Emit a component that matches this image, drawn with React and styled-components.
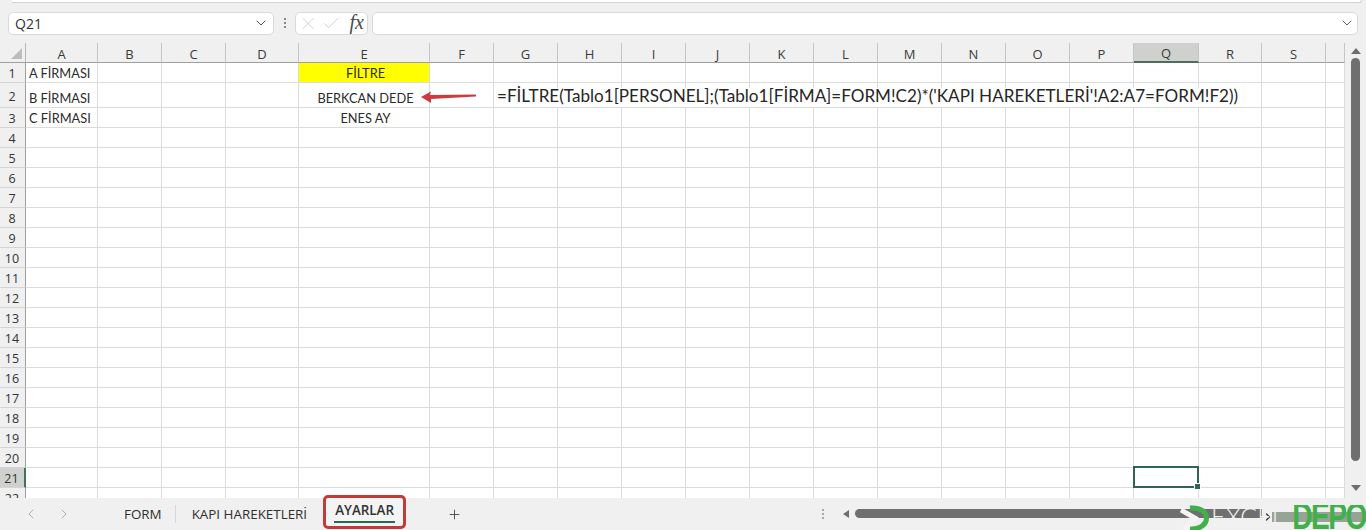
import React from 'react'
import styled, { createGlobalStyle } from 'styled-components'
import { ChevronDown, ChevronLeft, ChevronRight, Plus, X, Check } from 'lucide-react'

const columns = [
  ['A', 72], ['B', 64], ['C', 64], ['D', 73], ['E', 131], ['F', 64], ['G', 64], ['H', 64], ['I', 64], ['J', 64],
  ['K', 64], ['L', 64], ['M', 64], ['N', 64], ['O', 64], ['P', 64], ['Q', 65], ['R', 63], ['S', 64], ['T', 19]
]

const content = {
  A1: 'A FİRMASI',
  A2: 'B FİRMASI',
  A3: 'C FİRMASI',
  E1: 'FİLTRE',
  E2: 'BERKCAN DEDE',
  E3: 'ENES AY'
}

const GlobalStyle = createGlobalStyle`
  html, body {
    margin: 0;
    height: 100%;
    overflow: hidden;
    background: #f0f0f0;
  }
  body {
    font-family: "Open Sans", "Noto Sans", sans-serif;
    color: #262626;
  }
`

const Page = styled.div`
  width: 1366px;
  height: 530px;
  display: flex;
  flex-direction: column;
  background: #f0f0f0;
  overflow: hidden;
`

const RibbonEdge = styled.div`
  height: 2px;
  margin: 0 4px 0 12px;
  background: #fff;
  border-bottom: 1px solid #d2d2d2;
  border-right: 1px solid #d2d2d2;
  border-bottom-right-radius: 5px;
`

const FormulaRow = styled.div`
  display: flex;
  align-items: center;
  height: 24px;
  margin: 9px 8px 0;
`

const Field = styled.div`
  height: 100%;
  box-sizing: border-box;
  display: flex;
  align-items: center;
  background: #fff;
  border: 1px solid #d9d9d9;
  border-radius: 5px;
`

const NameBox = styled(Field)`
  width: 266px;
  padding: 0 4px 0 6px;
  justify-content: space-between;
  font-size: 14px;
  color: #333;
`

const Grip = styled.div`
  width: 21px;
  flex: none;
  display: flex;
  flex-direction: column;
  align-items: center;
  gap: 2px;
  & > i {
    width: 2px;
    height: 2px;
    background: ${({ $light }) => ($light ? '#a8a8a8' : '#8a8a8a')};
  }
`

const FxBox = styled(Field)`
  width: 73px;
  padding: 0 3px 0 2px;
  gap: 3px;
  color: #c8c8c8;
`

const FxLabel = styled.span`
  font-family: "Liberation Serif", serif;
  font-style: italic;
  font-size: 20px;
  line-height: 20px;
  color: #4a4a4a;
  margin: -3px 0 0 5px;
`

const FormulaInput = styled(Field)`
  flex: 1;
  margin-left: 4px;
  justify-content: flex-end;
  padding-right: 2px;
  color: #555;
`

const SheetArea = styled.div`
  display: flex;
  height: 455px;
  margin-top: 8px;
`

const Grid = styled.div`
  width: 1345px;
  height: 455px;
  overflow: hidden;
  display: grid;
  grid-template-columns: 26px ${columns.map(([, w]) => `${w}px`).join(' ')};
  grid-auto-rows: 20px;
  grid-template-rows: 20px 20px 25px;
  background: #fff;
`

const Corner = styled.div`
  position: relative;
  background: #f0f0f0;
  border-right: 1px solid #b5b5b5;
  border-bottom: 1px solid #9f9f9f;
  &::after {
    content: '';
    position: absolute;
    right: 3px;
    bottom: 3px;
    border-style: solid;
    border-width: 0 0 11px 11px;
    border-color: transparent transparent #bdbdbd transparent;
  }
`

const ColumnHead = styled.div`
  box-sizing: border-box;
  display: flex;
  align-items: center;
  justify-content: center;
  font-size: 13px;
  padding-top: 2px;
  color: #3a3a3a;
  background: ${({ $active }) => ($active ? '#cfd1cf' : '#f0f0f0')};
  border-right: 1px solid #c6c6c6;
  border-bottom: ${({ $active }) => ($active ? '2px solid #4d6e5e' : '1px solid #9f9f9f')};
`

const RowHead = styled.div`
  box-sizing: border-box;
  display: flex;
  align-items: center;
  justify-content: center;
  font-size: 12.5px;
  padding: 2px 1px 0 0;
  color: #333;
  background: ${({ $active }) => ($active ? '#cfd1cf' : '#f0f0f0')};
  border-right: ${({ $active }) => ($active ? '2px solid #44705c' : '1px solid #9f9f9f')};
  border-bottom: 1px solid #d4d4d4;
`

const Cell = styled.div`
  box-sizing: border-box;
  position: relative;
  display: flex;
  align-items: flex-end;
  justify-content: ${({ $center }) => ($center ? 'center' : 'flex-start')};
  padding: 0 0 0 3px;
  font-family: Lato, "Open Sans", sans-serif;
  font-size: 12.8px;
  line-height: 18px;
  white-space: nowrap;
  color: #2b2b2b;
  background: ${({ $fill }) => $fill || 'transparent'};
  border-right: 1px solid #dcdcdc;
  border-bottom: 1px solid #dcdcdc;
`

const Selection = styled.div`
  position: absolute;
  inset: -2px -1px -1px -1px;
  border: 2px solid #2f6650;
  z-index: 2;
  &::after {
    content: '';
    position: absolute;
    right: -4px;
    bottom: -4px;
    width: 5px;
    height: 5px;
    background: #2f6650;
    border: 1px solid #fff;
  }
`

const FormulaText = styled.span`
  position: relative;
  z-index: 1;
  height: 19px;
  line-height: 16px;
  padding-right: 2px;
  font-size: 17.1px;
  color: #262626;
  background: #fff;
`

const Arrow = styled.svg`
  position: absolute;
  left: -10px;
  top: 7px;
  z-index: 2;
`

const VerticalBar = styled.div`
  width: 21px;
  display: flex;
  flex-direction: column;
  align-items: center;
  padding: 5px 0 0 0;
  box-sizing: border-box;
  background: #f0f0f0;
`

const ArrowUp = styled.div`
  border-style: solid;
  border-width: 0 5px 6px;
  border-color: transparent transparent #6e6e6e;
`

const ArrowDown = styled(ArrowUp)`
  border-width: 6px 5px 0;
  border-color: #6e6e6e transparent transparent;
  margin-top: 24px;
`

const VerticalThumb = styled.div`
  width: 9px;
  height: 403px;
  margin-top: 4px;
  border-radius: 5px;
  background: #6f6f6f;
`

const TabBar = styled.div`
  position: relative;
  flex: 1;
  display: flex;
  align-items: center;
  background: #f0f0f0;
`

const NavButtons = styled.div`
  width: 114px;
  padding-left: 23px;
  box-sizing: border-box;
  display: flex;
  gap: 17px;
  color: #a9a9a9;
`

const Tabs = styled.div`
  display: flex;
  align-items: center;
  height: 32px;
`

const Tab = styled.div`
  position: relative;
  font-size: 13.4px;
  line-height: 18px;
  padding: ${({ $divider }) => ($divider ? '0 13px 0 10px' : '0 10px 0 16px')};
  color: #2f2f2f;
  border-right: ${({ $divider }) => ($divider ? '1px solid #d6d6d6' : 'none')};
`

const ActiveTab = styled.div`
  box-sizing: border-box;
  align-self: flex-start;
  width: 83px;
  height: 34px;
  margin: -3px 0 0 6px;
  padding-top: 3px;
  display: flex;
  flex-direction: column;
  align-items: center;
  font-size: 13.4px;
  line-height: 19px;
  font-weight: 600;
  color: #333;
  background: #f4f4f4;
  border: 3px solid #c23b3b;
  border-radius: 5px;
`

const TabUnderline = styled.div`
  width: 61px;
  height: 2px;
  margin-top: 1px;
  background: #2f6650;
`

const AddSheet = styled.div`
  margin-left: 41px;
  display: flex;
  color: #444;
`

const Scroller = styled.div`
  position: absolute;
  left: 812px;
  right: 0;
  top: 11px;
  height: 9px;
  display: flex;
  align-items: center;
`

const ScrollArrow = styled.div`
  margin-left: 10px;
  border-style: solid;
  border-width: 4px 6px 4px 0;
  border-color: transparent #6e6e6e transparent transparent;
`

const HorizontalThumb = styled.div`
  flex: none;
  width: 407px;
  height: 9px;
  margin-left: 6px;
  border-radius: 5px 0 0 5px;
  background: #6f6f6f;
`

const ScrollEnd = styled.div`
  flex: none;
  color: #333;
  display: flex;
  margin-top: 6px;
`

const ScrollSmudge = styled.div`
  flex: 1;
  height: 10px;
  margin: 6px 0 0 -2px;
  background: #97a397;
`

const Watermark = styled.div`
  position: absolute;
  right: 0;
  bottom: 0;
  height: 25px;
  width: 186px;
  overflow: hidden;
  display: flex;
  align-items: center;
`

const WatermarkMark = styled.svg`
  flex: none;
`

const WatermarkLight = styled.span`
  font-family: Lato, sans-serif;
  font-size: 25px;
  line-height: 25px;
  font-weight: 300;
  color: #f2f2f2;
  margin: -3px 0 0 1px;
`

const WatermarkGreen = styled.span`
  position: absolute;
  right: 0;
  top: -3px;
  font-family: "Liberation Sans", sans-serif;
  font-size: 37px;
  line-height: 30px;
  font-weight: 700;
  letter-spacing: -2px;
  color: #3fb04a;
  transform: scaleX(0.76);
  transform-origin: right center;
`

const RedArrow = () => (
  <Arrow width="58" height="14" viewBox="0 0 58 14">
    <path d="M1 7 L11 1.5 L10 5 L56 4.5 L56 6.5 L11 9 L11 13 Z" fill="#cf3a40" />
  </Arrow>
)

const RowCells = ({ row }) => (
  <>
    <RowHead $active={row === 21}>{row}</RowHead>
    {columns.map(([name]) => {
      const key = `${name}${row}`
      return (
        <Cell key={key} $center={name === 'E'} $fill={key === 'E1' ? '#ffff00' : undefined}>
          {content[key]}
          {key === 'F2' && <RedArrow />}
          {key === 'G2' && (
            <FormulaText>=FİLTRE(Tablo1[PERSONEL];(Tablo1[FİRMA]=FORM!C2)*('KAPI HAREKETLERİ'!A2:A7=FORM!F2))</FormulaText>
          )}
          {key === 'Q21' && <Selection />}
        </Cell>
      )
    })}
  </>
)

const App = () => (
  <Page>
    <GlobalStyle />
    <RibbonEdge />
    <FormulaRow>
      <NameBox>
        Q21
        <ChevronDown size={16} strokeWidth={1.4} color="#444" />
      </NameBox>
      <Grip><i /><i /><i /></Grip>
      <FxBox>
        <X size={21} strokeWidth={1} />
        <Check size={21} strokeWidth={1} />
        <FxLabel>fx</FxLabel>
      </FxBox>
      <FormulaInput>
        <ChevronDown size={16} strokeWidth={1.4} />
      </FormulaInput>
    </FormulaRow>
    <SheetArea>
      <Grid>
        <Corner />
        {columns.map(([name]) => (
          <ColumnHead key={name} $active={name === 'Q'}>{name === 'T' ? '' : name}</ColumnHead>
        ))}
        {Array.from({ length: 22 }, (_, i) => <RowCells key={i} row={i + 1} />)}
      </Grid>
      <VerticalBar>
        <ArrowUp />
        <VerticalThumb />
        <ArrowDown />
      </VerticalBar>
    </SheetArea>
    <TabBar>
      <NavButtons>
        <ChevronLeft size={16} strokeWidth={1.4} />
        <ChevronRight size={16} strokeWidth={1.4} />
      </NavButtons>
      <Tabs>
        <Tab $divider>FORM</Tab>
        <Tab>KAPI HAREKETLERİ</Tab>
        <ActiveTab>
          AYARLAR
          <TabUnderline />
        </ActiveTab>
      </Tabs>
      <AddSheet><Plus size={15} strokeWidth={1.4} /></AddSheet>
      <Scroller>
        <Grip $light><i /><i /><i /></Grip>
        <ScrollArrow />
        <HorizontalThumb />
        <ScrollEnd><ChevronRight size={12} strokeWidth={2.5} /></ScrollEnd>
        <ScrollSmudge />
      </Scroller>
      <Watermark>
        <WatermarkMark width="30" height="25" viewBox="0 0 30 25">
          <path d="M1 5 L15 13 L4 25" fill="none" stroke="#f4f4f4" strokeWidth="5" />
          <path d="M10 3 C 32 1, 32 25, 10 24" fill="none" stroke="#3fb04a" strokeWidth="5" />
        </WatermarkMark>
        <WatermarkLight>EXCEL</WatermarkLight>
        <WatermarkGreen>DEPO</WatermarkGreen>
      </Watermark>
    </TabBar>
  </Page>
)

export default App
